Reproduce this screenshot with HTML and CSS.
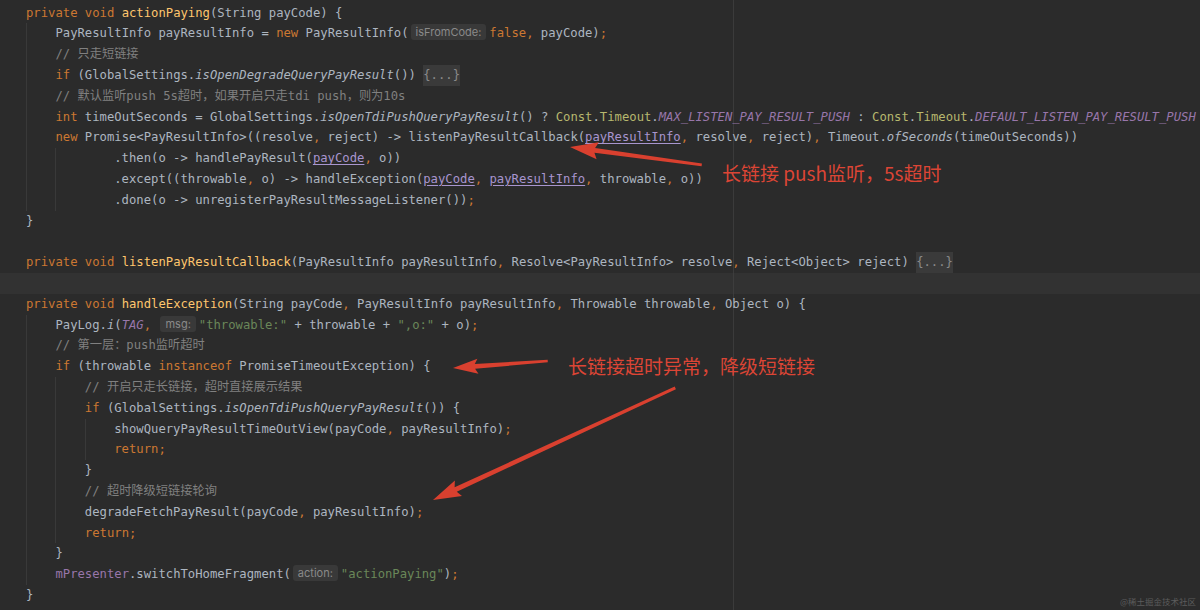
FILE: index.html
```html
<!DOCTYPE html>
<html lang="zh">
<head>
    <meta charset="UTF-8">
    <title>PayResult - Editor</title>
    <link rel="stylesheet" href="styles.css">
</head>
<body>
    <div class="editor">
        <div class="code">
            <div class="ln"><span class="k">private void </span><span class="f">actionPaying</span>(String payCode) {</div>
            <div class="ln"><span class="ind g"></span>PayResultInfo payResultInfo = <span class="k">new</span> PayResultInfo(<span class="hint">isFromCode:</span><span class="k">false</span><span class="p">,</span> payCode)<span class="p">;</span></div>
            <div class="ln"><span class="ind g"></span><span class="c">// 只走短链接</span></div>
            <div class="ln"><span class="ind g"></span><span class="k">if</span> (GlobalSettings.<span class="i">isOpenDegradeQueryPayResult</span>()) <span class="fold">{...}</span></div>
            <div class="ln"><span class="ind g"></span><span class="c">// 默认监听push 5s超时，如果开启只走tdi push，则为10s</span></div>
            <div class="ln"><span class="ind g"></span><span class="k">int</span> timeOutSeconds = GlobalSettings.<span class="i">isOpenTdiPushQueryPayResult</span>() ? <span class="o">Const</span>.<span class="o">Timeout</span>.<span class="v">MAX_LISTEN_PAY_RESULT_PUSH</span> : <span class="o">Const</span>.<span class="o">Timeout</span>.<span class="v">DEFAULT_LISTEN_PAY_RESULT_PUSH</span></div>
            <div class="ln"><span class="ind g"></span><span class="k">new</span> Promise&lt;PayResultInfo&gt;((resolve<span class="p">,</span> reject) -&gt; listenPayResultCallback(<span class="u">payResultInfo</span><span class="p">,</span> resolve<span class="p">,</span> reject)<span class="p">,</span> Timeout.<span class="i">ofSeconds</span>(timeOutSeconds))</div>
            <div class="ln"><span class="ind g"></span><span class="ind g"></span><span class="ind"></span>.then(o -&gt; handlePayResult(<span class="u">payCode</span><span class="p">,</span> o))</div>
            <div class="ln"><span class="ind g"></span><span class="ind g"></span><span class="ind"></span>.except((throwable<span class="p">,</span> o) -&gt; handleException(<span class="u">payCode</span><span class="p">,</span> <span class="u">payResultInfo</span><span class="p">,</span> throwable<span class="p">,</span> o))</div>
            <div class="ln"><span class="ind g"></span><span class="ind g"></span><span class="ind"></span>.done(o -&gt; unregisterPayResultMessageListener())<span class="p">;</span></div>
            <div class="ln">}</div>
            <div class="ln"></div>
            <div class="ln"><span class="k">private void </span><span class="f">listenPayResultCallback</span>(PayResultInfo payResultInfo<span class="p">,</span> Resolve&lt;PayResultInfo&gt; resolve<span class="p">,</span> Reject&lt;Object&gt; reject) <span class="fold">{...}</span></div>
            <div class="ln cur"></div>
            <div class="ln"><span class="k">private void </span><span class="f">handleException</span>(String payCode<span class="p">,</span> PayResultInfo payResultInfo<span class="p">,</span> Throwable throwable<span class="p">,</span> Object o) {</div>
            <div class="ln"><span class="ind g"></span>PayLog.<span class="i">i</span>(<span class="v">TAG</span><span class="p">,</span> <span class="hint">msg:</span><span class="s">"throwable:"</span> + throwable + <span class="s">",o:"</span> + o)<span class="p">;</span></div>
            <div class="ln"><span class="ind g"></span><span class="c">// 第一层：push监听超时</span></div>
            <div class="ln"><span class="ind g"></span><span class="k">if</span> (throwable <span class="k">instanceof</span> PromiseTimeoutException) {</div>
            <div class="ln"><span class="ind g"></span><span class="ind g"></span><span class="c">// 开启只走长链接，超时直接展示结果</span></div>
            <div class="ln"><span class="ind g"></span><span class="ind g"></span><span class="k">if</span> (GlobalSettings.<span class="i">isOpenTdiPushQueryPayResult</span>()) {</div>
            <div class="ln"><span class="ind g"></span><span class="ind g"></span><span class="ind g"></span>showQueryPayResultTimeOutView(payCode<span class="p">,</span> payResultInfo)<span class="p">;</span></div>
            <div class="ln"><span class="ind g"></span><span class="ind g"></span><span class="ind g"></span><span class="k">return;</span></div>
            <div class="ln"><span class="ind g"></span><span class="ind g"></span>}</div>
            <div class="ln"><span class="ind g"></span><span class="ind g"></span><span class="c">// 超时降级短链接轮询</span></div>
            <div class="ln"><span class="ind g"></span><span class="ind g"></span>degradeFetchPayResult(payCode<span class="p">,</span> payResultInfo)<span class="p">;</span></div>
            <div class="ln"><span class="ind g"></span><span class="ind g"></span><span class="k">return;</span></div>
            <div class="ln"><span class="ind g"></span>}</div>
            <div class="ln"><span class="ind g"></span><span class="m">mPresenter</span>.switchToHomeFragment(<span class="hint">action:</span><span class="s">"actionPaying"</span>)<span class="p">;</span></div>
            <div class="ln">}</div>
        </div>

        <!-- red markup drawn over the screenshot -->
        <svg class="arrows" width="1200" height="610" viewBox="0 0 1200 610">
            <g fill="#d9402f">
                <polygon transform="translate(570 147) rotate(7.77)" points="0,0 28,-8.5 25,-2.4 133,-1.4 133,1.4 25,2.4 28,8.5"/>
                <polygon transform="translate(453 368) rotate(-4.21)" points="0,0 25,-7.5 22,-2.3 95,-1.3 95,1.3 22,2.3 25,7.5"/>
                <polygon transform="translate(433 500) rotate(-24.83)" points="0,0 28,-8.5 25,-2.5 267,-1.4 267,1.4 25,2.5 28,8.5"/>
            </g>
        </svg>
        <div class="note note-push">长链接 push监听，5s超时</div>
        <div class="note note-timeout">长链接超时异常，降级短链接</div>
        <div class="mark">@稀土掘金技术社区</div>
    </div>
</body>
</html>
```

FILE: styles.css
```css
body {
    margin: 0;
    width: 1200px;
    height: 610px;
    overflow: hidden;
    background-color: #2b2b2b;
}
.editor {
    position: relative;
    height: 610px;
    background: linear-gradient(90deg, transparent 733px, #3b3b3b 733px, #3b3b3b 734px, transparent 734px), #2b2b2b;
    font-family: "DejaVu Sans Mono", "Noto Sans CJK SC", monospace;
    font-size: 12.23px;
    color: #adb6c0;
}
.code {
    padding-top: 2.6px;
}
.ln {
    height: 20.8px;
    line-height: 20.8px;
    padding-left: 26px;
    white-space: pre;
}
.ln.cur {
    background: linear-gradient(90deg, transparent 733px, #3d3d3d 733px, #3d3d3d 734px, transparent 734px), #323232;
}
.ind {
    display: inline-block;
    width: 4ch;
    height: 20.8px;
    vertical-align: top;
}
.ind.g {
    background: linear-gradient(#393939, #393939) no-repeat 0 0 / 1px 100%;
}
.k { color: #cc7832; }
.p { color: #cc7832; }
.f { color: #ffc66d; }
.c { color: #808080; }
.i { font-style: italic; }
.v { color: #9876aa; font-style: italic; }
.m { color: #9876aa; }
.s { color: #6a8759; }
.o { color: #b7b86e; }
.u {
    color: #a895cf;
    text-decoration: underline;
    text-underline-offset: 2px;
}
.hint {
    display: inline-block;
    margin: 0 3px 0 2px;
    padding: 0 5px;
    line-height: 16px;
    border-radius: 3px;
    background-color: #393939;
    color: #8a8a8a;
    font-family: "Inter", "Noto Sans", sans-serif;
    font-size: 11px;
    vertical-align: 1px;
}
.fold {
    display: inline-block;
    height: 20.8px;
    background-color: #3a3a3a;
    color: #8a8a8a;
    vertical-align: top;
}
.arrows {
    position: absolute;
    top: 0;
    left: 0;
}
.note {
    position: absolute;
    font-family: "Noto Sans CJK SC", "Noto Sans", sans-serif;
    font-size: 19px;
    line-height: 24px;
    color: #dc4535;
    white-space: nowrap;
}
.note-push {
    left: 722px;
    top: 161px;
}
.note-timeout {
    left: 568px;
    top: 354px;
}
.mark {
    position: absolute;
    right: 4px;
    bottom: 3px;
    font-family: "Noto Sans CJK SC", sans-serif;
    font-size: 8.5px;
    color: #5c5c5c;
}
```
